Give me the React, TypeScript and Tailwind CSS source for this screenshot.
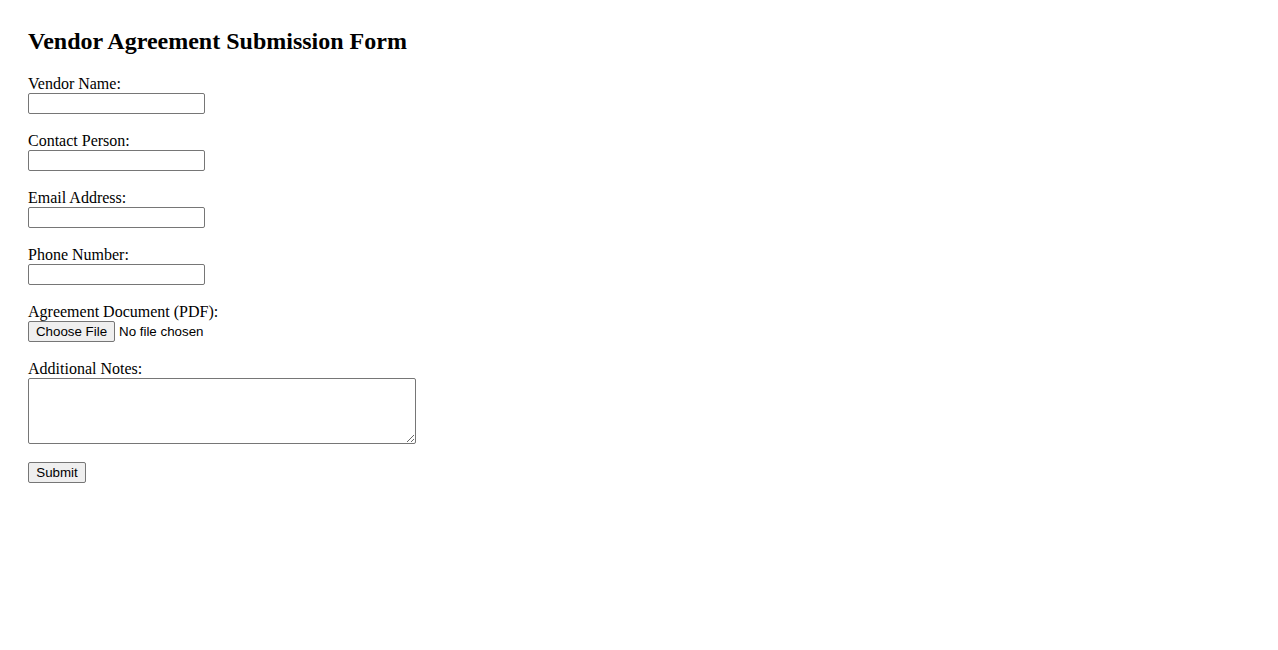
import { useState } from 'react';

const fields = [
    { id: 'vendorName', label: 'Vendor Name:', type: 'text' },
    { id: 'contactPerson', label: 'Contact Person:', type: 'text' },
    { id: 'email', label: 'Email Address:', type: 'email' },
    { id: 'phone', label: 'Phone Number:', type: 'tel' },
];

const inputClass =
    'block h-[21px] w-[177px] rounded-[2px] border border-[#767676] bg-white px-[2px] py-[1px] text-[13.33px] [font-family:"Liberation_Sans",Arial,sans-serif] outline-none';

const buttonClass =
    'h-[21px] rounded-[2px] border border-[#767676] bg-[#efefef] text-[13.33px] leading-none text-black [font-family:"Liberation_Sans",Arial,sans-serif]';

export default function App() {
    const [values, setValues] = useState<Record<string, string>>({});
    const [notes, setNotes] = useState('');

    return (
        <div className="min-h-screen bg-white px-[28px] pt-[27px] text-black [font-family:'Liberation_Serif','Times_New_Roman',serif]">
            <h2 className="mb-[20px] text-[24px] font-bold leading-[28px]">
                Vendor Agreement Submission Form
            </h2>
            <form onSubmit={(e) => e.preventDefault()} className="flex flex-col items-start">
                {fields.map((f) => (
                    <div key={f.id} className="mb-[18px]">
                        <label htmlFor={f.id} className="block text-[16px] leading-[18px]">
                            {f.label}
                        </label>
                        <input
                            id={f.id}
                            type={f.type}
                            value={values[f.id] ?? ''}
                            onChange={(e) => setValues({ ...values, [f.id]: e.target.value })}
                            className={inputClass}
                        />
                    </div>
                ))}

                <div className="mb-[18px]">
                    <label className="block text-[16px] leading-[18px]">Agreement Document (PDF):</label>
                    <div className="flex items-center">
                        <button type="button" className={`${buttonClass} w-[87px]`}>
                            Choose File
                        </button>
                        <span className="ml-[4px] text-[13.33px] [font-family:'Liberation_Sans',Arial,sans-serif]">
                            No file chosen
                        </span>
                    </div>
                </div>

                <div className="mb-[18px]">
                    <label htmlFor="notes" className="block text-[16px] leading-[18px]">
                        Additional Notes:
                    </label>
                    <textarea
                        id="notes"
                        value={notes}
                        onChange={(e) => setNotes(e.target.value)}
                        className="block h-[66px] w-[388px] resize rounded-[2px] border border-[#767676] bg-white p-[2px] text-[13.33px] [font-family:'Liberation_Mono',monospace] outline-none"
                    />
                </div>

                <button type="submit" className={`${buttonClass} w-[58px]`}>
                    Submit
                </button>
            </form>
        </div>
    );
}
